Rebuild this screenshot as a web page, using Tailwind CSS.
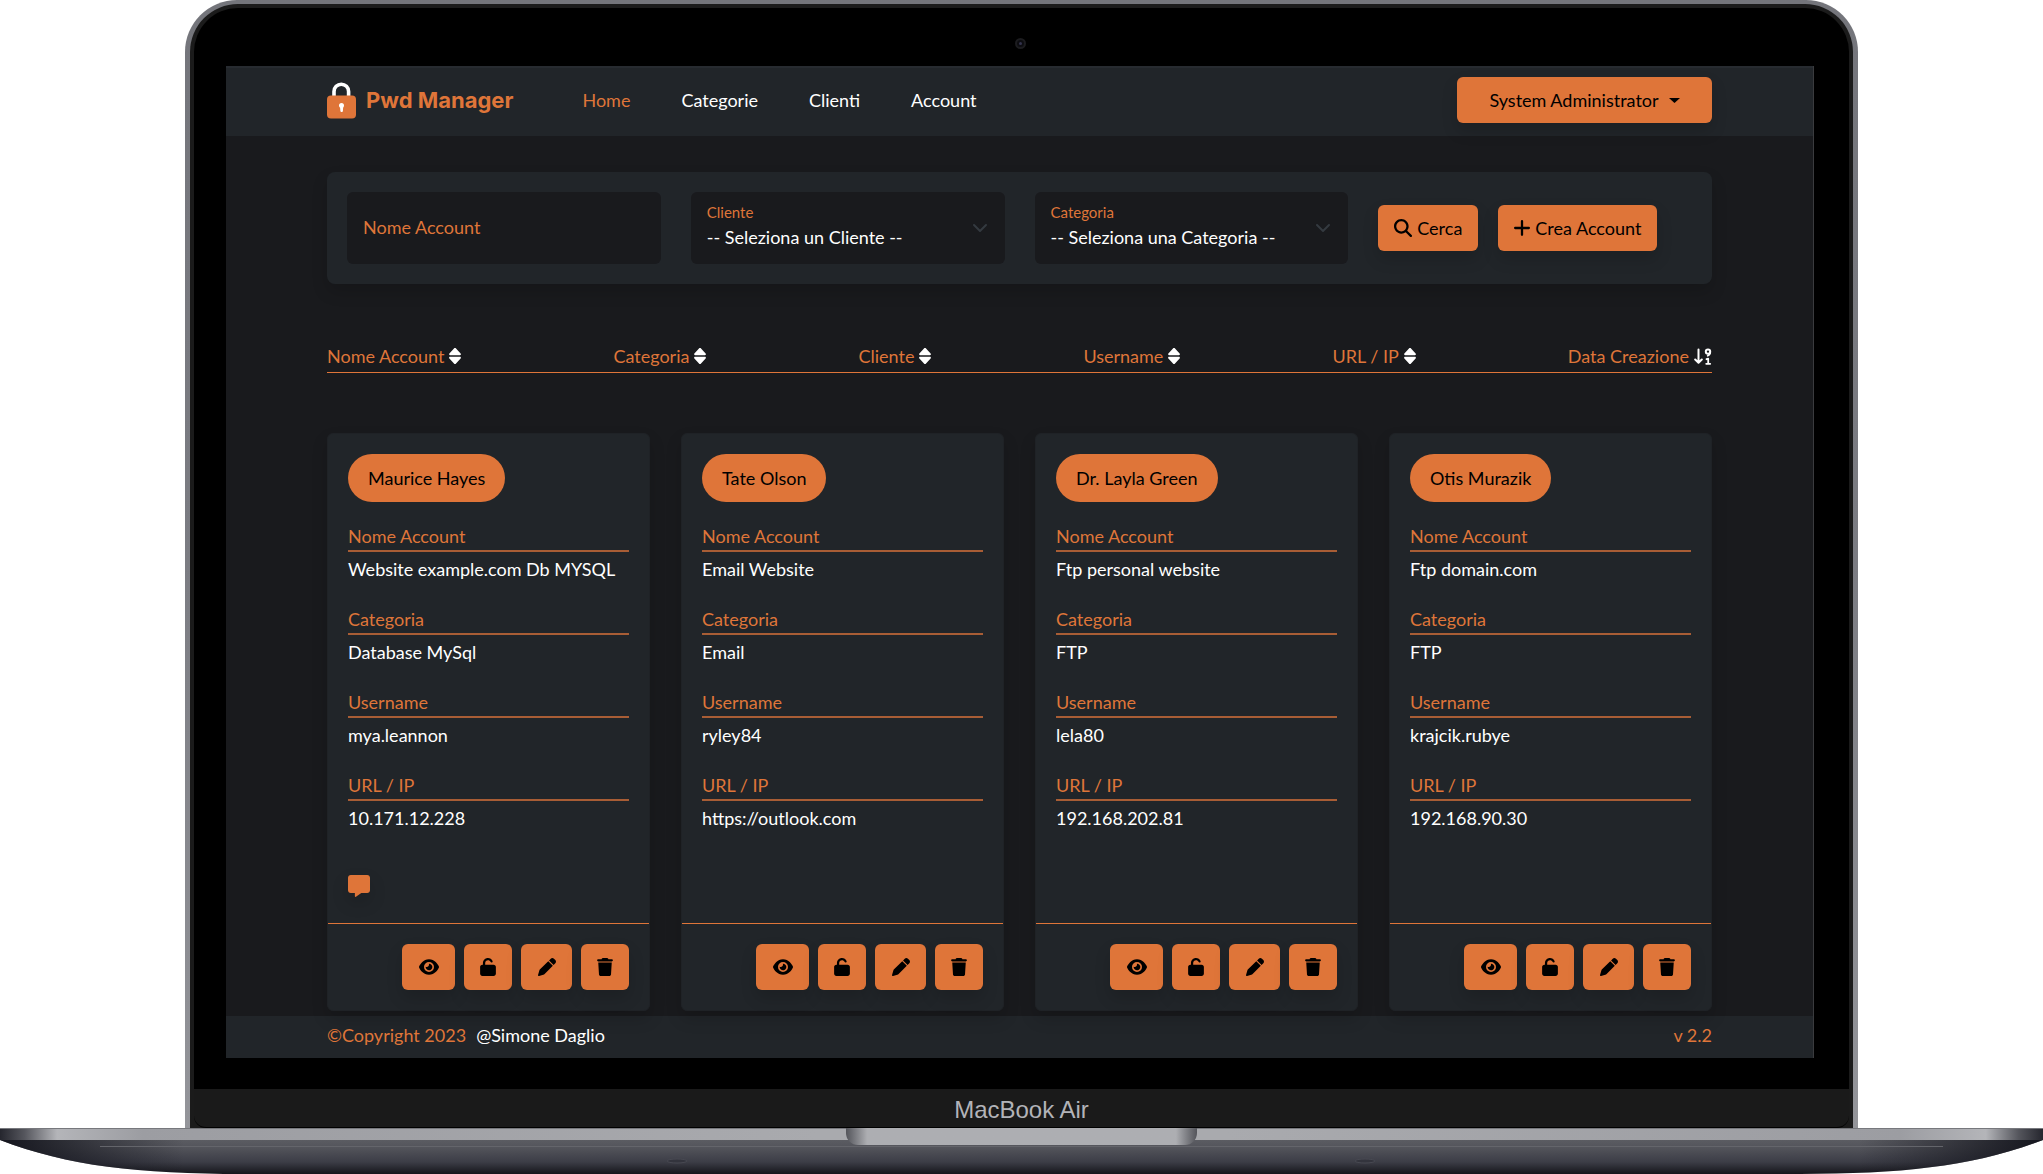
<!DOCTYPE html>
<html lang="it">
<head>
<meta charset="utf-8">
<meta name="viewport" content="width=device-width, initial-scale=1">
<title>Pwd Manager</title>
<script src="https://cdn.jsdelivr.net/npm/@tailwindcss/browser@4"></script>
</head>
<body class="bg-white font-['Lato',sans-serif] text-[18px] leading-6">

<!-- Icon sprite -->
<svg class="hidden" aria-hidden="true">
  <symbol id="i-sort" viewBox="0 0 12 16"><path d="M5.200.2 .4 5.600C-.2 6.300 .2 7.300 1 7.300h10c.8 0 1.200-1 .6-1.700L6.800.2a1.100 1.100 0 0 0-1.600 0zM5.200 15.800.4 10.400C-.2 9.700.2 8.700 1 8.700h10c.8 0 1.200 1 .6 1.700l-4.800 5.400a1.100 1.100 0 0 1-1.600 0z"/></symbol>
  <symbol id="i-sort-num" viewBox="0 0 18 17"><g fill="none" stroke="currentColor" stroke-width="2" stroke-linecap="round" stroke-linejoin="round"><path d="M4.500 1.500v13M1.200 11.500l3.300 3.300 3.300-3.300"/><circle cx="14" cy="3.600" r="2.200"/><path d="M16.200 4c0 1.900-.9 3-2.500 3.700M12.500 11.200l1.700-.6V15.700M12.200 15.800h4" stroke-width="1.800"/></g></symbol>
  <symbol id="i-search" viewBox="0 0 512 512"><path d="M416 208c0 45.900-14.900 88.300-40 122.700L502.600 457.400c12.500 12.500 12.500 32.800 0 45.300s-32.800 12.500-45.300 0L330.700 376c-34.400 25.200-76.800 40-122.700 40C93.100 416 0 322.900 0 208S93.100 0 208 0S416 93.100 416 208zM208 352a144 144 0 1 0 0-288 144 144 0 1 0 0 288z"/></symbol>
  <symbol id="i-plus" viewBox="0 0 14 14"><path d="M7 1v12M1 7h12" fill="none" stroke="currentColor" stroke-width="2" stroke-linecap="round"/></symbol>
  <symbol id="i-eye" viewBox="0 0 576 512"><path d="M288 32c-80.800 0-145.500 36.800-192.600 80.600C48.600 156 17.300 208 2.500 243.700c-3.300 7.900-3.300 16.700 0 24.600C17.300 304 48.600 356 95.400 399.400C142.500 443.200 207.200 480 288 480s145.500-36.800 192.600-80.600c46.800-43.500 78.100-95.400 93-131.100c3.300-7.900 3.300-16.700 0-24.600c-14.900-35.700-46.200-87.700-93-131.100C433.500 68.800 368.800 32 288 32zM144 256a144 144 0 1 1 288 0 144 144 0 1 1 -288 0zm144-64c0 35.300-28.700 64-64 64c-7.100 0-13.900-1.200-20.300-3.300c-5.500-1.800-11.900 1.600-11.700 7.400c.3 6.900 1.300 13.800 3.200 20.700c13.700 51.200 66.400 81.600 117.600 67.900s81.600-66.400 67.900-117.600c-11.100-41.500-47.800-69.400-88.600-71.100c-5.800-.2-9.200 6.100-7.400 11.700c2.100 6.400 3.300 13.200 3.300 20.300z"/></symbol>
  <symbol id="i-unlock" viewBox="0 0 448 512"><path d="M144 144c0-44.200 35.800-80 80-80c31.900 0 59.400 18.600 72.300 45.700c7.600 16 26.700 22.800 42.600 15.200s22.800-26.700 15.200-42.600C331 33.700 281.500 0 224 0C144.500 0 80 64.500 80 144v48H64c-35.300 0-64 28.700-64 64V448c0 35.300 28.700 64 64 64H384c35.300 0 64-28.700 64-64V256c0-35.300-28.700-64-64-64H144V144z"/></symbol>
  <symbol id="i-pen" viewBox="0 0 512 512"><path d="M362.700 19.300L314.300 67.700 444.300 197.700l48.400-48.400c25-25 25-65.500 0-90.500L453.300 19.300c-25-25-65.500-25-90.500 0zm-71 71L58.600 323.500c-10.400 10.400-18 23.300-22.200 37.400L1 481.200C-1.500 489.700 .8 498.800 7 505s15.300 8.500 23.700 6.100l120.300-35.400c14.100-4.200 27-11.800 37.400-22.200L421.700 220.300 291.700 90.300z"/></symbol>
  <symbol id="i-trash" viewBox="0 0 448 512"><path d="M135.200 17.700L128 32H32C14.300 32 0 46.300 0 64S14.300 96 32 96H416c17.700 0 32-14.300 32-32s-14.300-32-32-32H320l-7.200-14.300C307.400 6.800 296.300 0 284.200 0H163.800c-12.100 0-23.200 6.800-28.600 17.700zM416 128H32L53.200 467c1.600 25.300 22.600 45 47.900 45H346.900c25.300 0 46.300-19.700 47.900-45L416 128z"/></symbol>
  <symbol id="i-note" viewBox="0 0 512 512"><path d="M64 0C28.700 0 0 28.700 0 64V352c0 35.300 28.700 64 64 64h96v80c0 6.100 3.400 11.600 8.800 14.300s11.900 2.100 16.800-1.500L309.300 416H448c35.300 0 64-28.700 64-64V64c0-35.300-28.700-64-64-64H64z"/></symbol>
  <symbol id="i-chevron" viewBox="0 0 16 16"><path d="m2 5 6 6 6-6" fill="none" stroke="currentColor" stroke-width="2" stroke-linecap="round" stroke-linejoin="round"/></symbol>
</svg>

<!-- Laptop lid -->
<div class="mx-[185px] rounded-t-[52px] bg-linear-to-b from-[#74757b] via-[#7b7c82] to-[#94959a] px-[5px] pt-1">
  <div class="rounded-t-[48px] bg-[#1b1b1b] px-1 pt-1">
    <div class="rounded-t-[44px] bg-black pr-[35px] pb-[31px] pl-8">
      <div class="flex h-[58px] items-center justify-center pt-3">
        <span class="flex size-[11px] items-center justify-center rounded-full border-2 border-[#1c1c1f] bg-[#0c0c10]"><span class="size-[3px] rounded-full bg-[#33334d]"></span></span>
      </div>

      <!-- Application -->
      <div class="border-r border-[#3a3b3e] bg-[#191a1d] text-white">
        <header class="flex h-[70px] items-center border-t-2 border-[#272b30] bg-[#212529] px-[101px] pb-1">
          <a href="#" class="flex items-center gap-2.5 font-['Inter',sans-serif] text-[22px] font-bold text-[#df7539]">
            <svg class="h-[37px] w-[29px]" viewBox="0 0 29 37" aria-hidden="true">
              <path d="M7 15V9.500a7.300 7.300 0 0 1 14.600 0V15" fill="none" stroke="#fff" stroke-width="3.600"/>
              <rect y="13.500" width="29" height="23" rx="4" fill="#df7539"/>
              <path d="M12 23.500a2.500 2.500 0 0 1 5 0c0 1.200-.5 1.700-.9 2.200l-.2 3.300c-.1 1.300-2.400 1.300-2.500 0l-.3-3.300c-.6-.5-1.100-1-1.100-2.200z" fill="#fff"/>
            </svg>
            Pwd Manager
          </a>
          <nav class="ml-[69px] flex gap-[51px]">
            <a href="#" class="text-[#df7539]">Home</a>
            <a href="#">Categorie</a>
            <a href="#">Clienti</a>
            <a href="#">Account</a>
          </nav>
          <button type="button" class="ml-auto flex h-[46px] w-[255px] items-center justify-center gap-2.5 rounded-md bg-[#df7539] text-black shadow-[0_8px_16px_rgba(0,0,0,0.15)]">
            System Administrator
            <svg class="h-[5px] w-[11px]" viewBox="0 0 11 5" aria-hidden="true"><path d="M0 0h11L5.500 5z"/></svg>
          </button>
        </header>

        <main class="px-[101px] pt-9 pb-[5px]">
          <form class="grid grid-cols-4 gap-[30px] rounded-lg bg-[#212529] p-5 shadow-[0_8px_16px_rgba(0,0,0,0.15)]">
            <div class="relative">
              <label for="nome" class="pointer-events-none absolute inset-y-0 left-4 flex items-center pb-0.5 text-[#df7539]">Nome Account</label>
              <input id="nome" type="text" class="h-[72px] w-full rounded-md bg-[#191a1d] px-4">
            </div>
            <div class="relative">
              <label for="cliente" class="pointer-events-none absolute top-2 left-4 text-[15px] text-[#df7539]">Cliente</label>
              <select id="cliente" class="h-[72px] w-full appearance-none rounded-md bg-[#191a1d] px-4 pt-[18px]"><option>-- Seleziona un Cliente --</option></select>
              <svg class="pointer-events-none absolute inset-y-0 right-[17px] my-auto size-4 text-[#343a40]" aria-hidden="true"><use href="#i-chevron"/></svg>
            </div>
            <div class="relative">
              <label for="categoria" class="pointer-events-none absolute top-2 left-4 text-[15px] text-[#df7539]">Categoria</label>
              <select id="categoria" class="h-[72px] w-full appearance-none rounded-md bg-[#191a1d] px-4 pt-[18px]"><option>-- Seleziona una Categoria --</option></select>
              <svg class="pointer-events-none absolute inset-y-0 right-[17px] my-auto size-4 text-[#343a40]" aria-hidden="true"><use href="#i-chevron"/></svg>
            </div>
            <div class="flex items-center gap-5">
              <button type="submit" class="flex h-[46px] items-center gap-[5px] rounded-md bg-[#df7539] px-4 text-black shadow-[0_8px_16px_rgba(0,0,0,0.15)]">
                <svg class="size-[18px]" aria-hidden="true"><use href="#i-search"/></svg>Cerca
              </button>
              <button type="button" class="flex h-[46px] items-center gap-[5px] rounded-md bg-[#df7539] px-4 text-black shadow-[0_8px_16px_rgba(0,0,0,0.15)]">
                <svg class="size-4" aria-hidden="true"><use href="#i-plus"/></svg>Crea Account
              </button>
            </div>
          </form>

          <div id="sort" class="mt-[60px] flex justify-between border-b border-[#df7539] pb-1 text-[#df7539]"></div>

          <div id="cards" class="mt-[60px] grid grid-cols-4 gap-[31px]"></div>
        </main>

        <footer class="flex h-[42px] items-center gap-2.5 bg-[#212529] px-[101px] pb-1 text-[#df7539]">
          <span>©Copyright 2023</span>
          <a href="#" class="text-white">@Simone Daglio</a>
          <span class="ml-auto">v 2.2</span>
        </footer>
      </div>
    </div>

    <div class="flex h-[39px] items-center justify-center rounded-b-xl border-b border-black bg-[#1a1a1a] pt-1 font-['Liberation_Sans',sans-serif] text-2xl text-[#b2b3b8]">MacBook Air</div>
  </div>
</div>

<!-- Laptop base -->
<div class="relative">
  <svg class="block h-[46px] w-full" viewBox="0 0 2043 46" preserveAspectRatio="none" aria-hidden="true">
    <defs>
      <linearGradient id="band"><stop offset="0" stop-color="#25262e"/><stop offset=".012" stop-color="#55565d"/><stop offset=".028" stop-color="#b4b5b9"/><stop offset=".07" stop-color="#9c9da2"/><stop offset=".4" stop-color="#a9aaae"/><stop offset=".6" stop-color="#a9aaae"/><stop offset=".93" stop-color="#9c9da2"/><stop offset=".972" stop-color="#b4b5b9"/><stop offset=".988" stop-color="#55565d"/><stop offset="1" stop-color="#25262e"/></linearGradient>
      <linearGradient id="under" x2="0" y2="1"><stop offset="0" stop-color="#5b5c62"/><stop offset=".2" stop-color="#54555c"/><stop offset=".65" stop-color="#3c3d46"/><stop offset="1" stop-color="#15151b"/></linearGradient>
      <linearGradient id="edge"><stop offset="0" stop-color="#14151d"/><stop offset=".09" stop-color="#14151d" stop-opacity="0"/><stop offset=".91" stop-color="#14151d" stop-opacity="0"/><stop offset="1" stop-color="#14151d"/></linearGradient>
    </defs>
    <path d="M0 12H2043C1975 38 1905 46 1800 46H243C138 46 68 38 0 12z" fill="url(#under)"/>
    <path d="M0 12H2043C1975 38 1905 46 1800 46H243C138 46 68 38 0 12z" fill="url(#edge)"/>
    <rect width="2043" height="12" fill="url(#band)"/>
    <rect width="2043" height="1" fill="#77787d"/>
    <rect x="100" y="18" width="1843" height="1" fill="#64656b"/>
    <g fill="#33343d" stroke="#484952"><ellipse cx="677" cy="33" rx="10" ry="2"/><ellipse cx="1365" cy="33" rx="10" ry="2"/></g>
  </svg>
  <div class="absolute inset-x-0 top-0 flex justify-center">
    <div class="h-[17px] w-[176px] rounded-bl-xl bg-linear-to-r from-[#54555b] via-[#adaeb2] via-12% to-[#adaeb2]"></div>
    <div class="h-[17px] w-[175px] rounded-br-xl bg-linear-to-l from-[#54555b] via-[#adaeb2] via-12% to-[#adaeb2]"></div>
  </div>
</div>

<script>
const icon = (id, cls) => `<svg class="${cls}" fill="currentColor" aria-hidden="true"><use href="#i-${id}"/></svg>`;

document.getElementById('sort').innerHTML =
  ['Nome Account', 'Categoria', 'Cliente', 'Username', 'URL / IP', 'Data Creazione'].map((name, i) =>
    `<button type="button" class="flex items-center gap-[5px]">${name}${i === 5 ? icon('sort-num', 'h-[17px] w-[18px] text-white') : icon('sort', 'h-4 w-3 text-white')}</button>`
  ).join('');

const accounts = [
  { client: 'Maurice Hayes', fields: ['Website example.com Db MYSQL', 'Database MySql', 'mya.leannon', '10.171.12.228'], note: true },
  { client: 'Tate Olson', fields: ['Email Website', 'Email', 'ryley84', 'https://outlook.com'] },
  { client: 'Dr. Layla Green', fields: ['Ftp personal website', 'FTP', 'lela80', '192.168.202.81'] },
  { client: 'Otis Murazik', fields: ['Ftp domain.com', 'FTP', 'krajcik.rubye', '192.168.90.30'] },
];
const labels = ['Nome Account', 'Categoria', 'Username', 'URL / IP'];
const actions = [['eye', 'Mostra', 'w-[53px]', 'h-[18px] w-5'], ['unlock', 'Sblocca', 'w-12', 'h-[18px] w-4'], ['pen', 'Modifica', 'w-[51px]', 'size-[18px]'], ['trash', 'Elimina', 'w-12', 'h-[18px] w-4']];

document.getElementById('cards').innerHTML = accounts.map(a => `
  <article class="flex flex-col rounded-md border border-[#1f2226] bg-[#212529] shadow-[0_8px_16px_rgba(0,0,0,0.15)]">
    <div class="flex flex-1 flex-col items-start px-5 pt-5 pb-[26px]">
      <h2 class="rounded-full bg-[#df7539] px-5 py-3 text-black">${a.client}</h2>
      <dl class="mt-[22px] flex w-full flex-col gap-[26px]">
        ${a.fields.map((v, i) => `<div>
          <dt class="border-b-2 border-[#a85d35] pb-0.5 text-[#df7539]">${labels[i]}</dt>
          <dd class="mt-[5px]">${v}</dd>
        </div>`).join('')}
      </dl>
      ${a.note ? `<button type="button" aria-label="Note" class="mt-[45px] text-[#df7539]">${icon('note', 'block size-[22px] drop-shadow-[0_8px_8px_rgba(0,0,0,0.15)]')}</button>` : ''}
    </div>
    <div class="flex justify-end gap-[9px] border-t border-[#df7539] p-5">
      ${actions.map(([id, name, w, size]) => `<button type="button" aria-label="${name}" class="flex h-[46px] items-center justify-center rounded-md bg-[#df7539] text-black shadow-[0_8px_16px_rgba(0,0,0,0.15)] ${w}">${icon(id, size)}</button>`).join('')}
    </div>
  </article>`).join('');
</script>
</body>
</html>
